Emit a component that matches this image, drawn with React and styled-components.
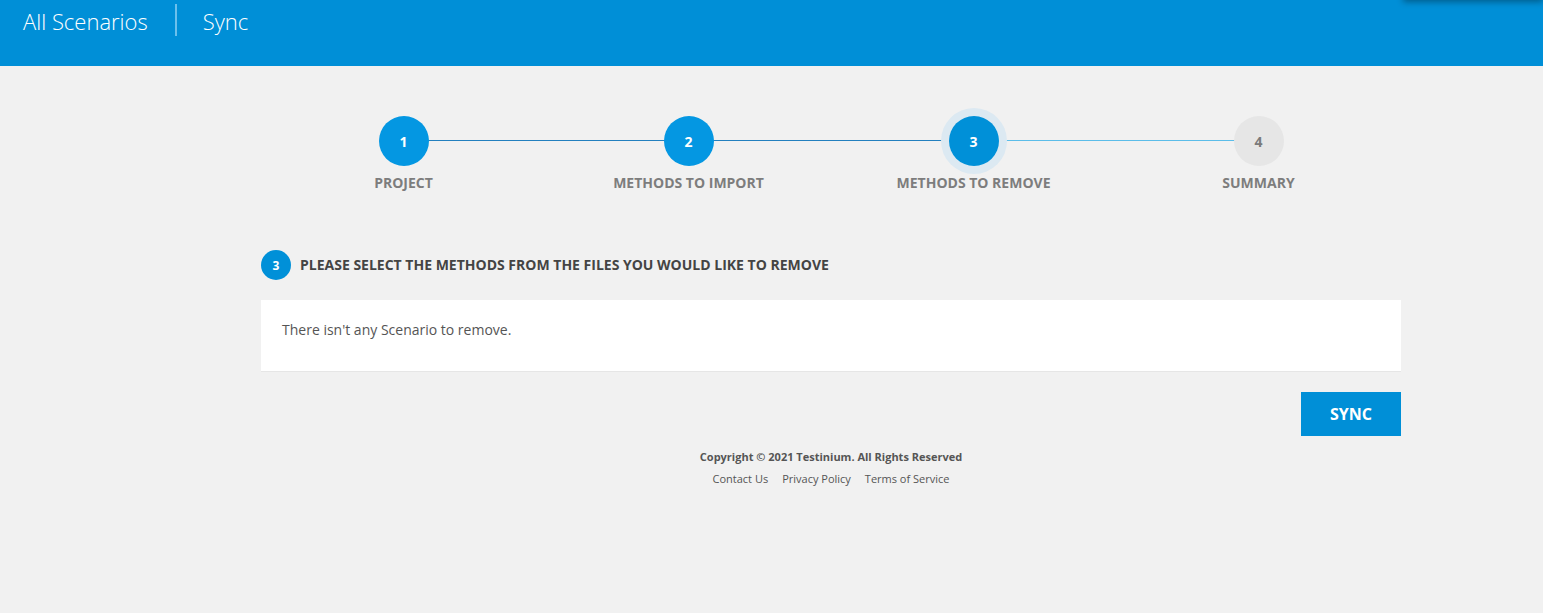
import React from "react";
import styled, { createGlobalStyle } from "styled-components";

const Global = createGlobalStyle`
  html, body { margin: 0; padding: 0; background: #f1f1f1; }
  body { font-family: "Open Sans", "Noto Sans", sans-serif; }
  * { box-sizing: border-box; }
`;

const Header = styled.header`
  position: relative;
  height: 66px;
  background: #008fd7;
  display: flex;
  align-items: flex-start;
  padding-left: 23px;
`;

const Crumb = styled.div`
  color: #fff;
  font-size: 22px;
  font-weight: 300;
  line-height: 42px;
  height: 42px;
`;

const Divider = styled.div`
  width: 2px;
  height: 32px;
  margin: 4px 26px 0 27px;
  background: #6cc0ec;
`;

const Shadow = styled.div`
  position: absolute;
  top: -10px;
  right: 0;
  width: 140px;
  height: 10px;
  box-shadow: 0 2px 6px rgba(0, 0, 0, 0.35);
`;

const Body = styled.div`
  display: flex;
  justify-content: center;
  padding-left: 119px;
`;

const Main = styled.main`
  width: 1140px;
  padding-top: 50px;
`;

const Stepper = styled.div`
  display: grid;
  grid-template-columns: repeat(4, 1fr);
`;

const Step = styled.div`
  display: flex;
  flex-direction: column;
  align-items: center;
  position: relative;
`;

const Line = styled.div`
  position: absolute;
  top: 24px;
  left: 50%;
  width: 100%;
  height: 1px;
  background: ${(p) => (p.$light ? "#5bbde9" : "#2380bf")};
  z-index: 0;
`;

const Circle = styled.div`
  position: relative;
  z-index: 1;
  width: 50px;
  height: 50px;
  border-radius: 50%;
  display: flex;
  align-items: center;
  justify-content: center;
  font-size: 14px;
  font-weight: 700;
  color: ${(p) => (p.$pending ? "#7b7b7b" : "#fff")};
  background: ${(p) => (p.$pending ? "#e6e6e6" : "#0497e2")};
  ${(p) => p.$active && `background: #0090d8; box-shadow: 0 0 0 8px #dce9f2;`}
`;

const StepLabel = styled.div`
  margin-top: 7px;
  font-size: 14px;
  font-weight: 700;
  color: #7d7d7d;
  line-height: 19px;
`;

const SectionTitle = styled.div`
  display: flex;
  align-items: center;
  gap: 9px;
  margin-top: 58px;
`;

const SmallCircle = styled.div`
  width: 30px;
  height: 30px;
  border-radius: 50%;
  background: #0090d8;
  color: #fff;
  font-size: 12px;
  font-weight: 700;
  display: flex;
  align-items: center;
  justify-content: center;
`;

const TitleText = styled.div`
  font-size: 14px;
  font-weight: 700;
  color: #444;
  margin-top: -2px;
`;

const Card = styled.div`
  margin-top: 20px;
  background: #fff;
  height: 72px;
  padding: 20px 21px;
  font-size: 14px;
  color: #555;
  line-height: 20px;
  border-bottom: 1px solid #e6e6e6;
`;

const Actions = styled.div`
  display: flex;
  justify-content: flex-end;
  margin-top: 20px;
`;

const SyncButton = styled.button`
  width: 100px;
  height: 44px;
  border: 0;
  background: #008fd7;
  color: #fff;
  font-family: "Open Sans", sans-serif;
  font-size: 16px;
  font-weight: 700;
  cursor: pointer;
`;

const Footer = styled.footer`
  text-align: center;
  margin-top: 13px;
`;

const Copy = styled.div`
  font-size: 11px;
  font-weight: 700;
  color: #555;
  line-height: 16px;
`;

const Links = styled.div`
  display: flex;
  justify-content: center;
  gap: 14px;
  margin-top: 6px;
`;

const FootLink = styled.a`
  font-size: 11px;
  color: #555;
  text-decoration: none;
  line-height: 16px;
`;

const steps = [
  { n: 1, label: "PROJECT" },
  { n: 2, label: "METHODS TO IMPORT" },
  { n: 3, label: "METHODS TO REMOVE", active: true },
  { n: 4, label: "SUMMARY", pending: true },
];

export default function App() {
  return (
    <>
      <Global />
      <Header>
        <Crumb>All Scenarios</Crumb>
        <Divider />
        <Crumb>Sync</Crumb>
        <Shadow />
      </Header>
      <Body>
        <Main>
          <Stepper>
            {steps.map((s, i) => (
              <Step key={s.n}>
                {i < steps.length - 1 && <Line $light={i >= 2} />}
                <Circle $active={s.active} $pending={s.pending}>
                  {s.n}
                </Circle>
                <StepLabel>{s.label}</StepLabel>
              </Step>
            ))}
          </Stepper>
          <SectionTitle>
            <SmallCircle>3</SmallCircle>
            <TitleText>
              PLEASE SELECT THE METHODS FROM THE FILES YOU WOULD LIKE TO REMOVE
            </TitleText>
          </SectionTitle>
          <Card>There isn't any Scenario to remove.</Card>
          <Actions>
            <SyncButton>SYNC</SyncButton>
          </Actions>
          <Footer>
            <Copy>Copyright © 2021 Testinium. All Rights Reserved</Copy>
            <Links>
              <FootLink href="#">Contact Us</FootLink>
              <FootLink href="#">Privacy Policy</FootLink>
              <FootLink href="#">Terms of Service</FootLink>
            </Links>
          </Footer>
        </Main>
      </Body>
    </>
  );
}
